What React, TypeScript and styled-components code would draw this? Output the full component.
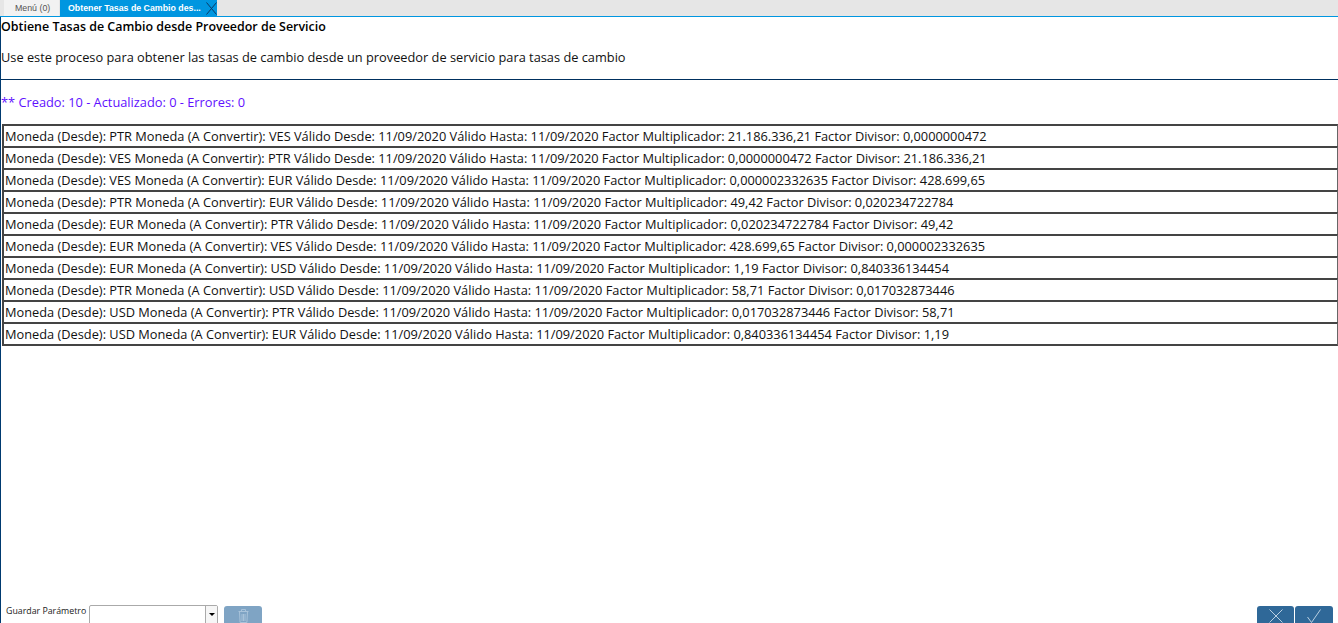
import React from "react";
import styled, { createGlobalStyle } from "styled-components";

const Global = createGlobalStyle`
  html, body { margin: 0; padding: 0; background: #fff; overflow: hidden; }
  * { box-sizing: border-box; }
`;

const Page = styled.div`
  width: 1338px;
  height: 623px;
  display: flex;
  flex-direction: column;
  font-family: "Open Sans", sans-serif;
  color: #111;
`;

const TabBar = styled.div`
  height: 17px;
  flex: none;
  display: flex;
  padding-left: 4px;
  background: #e6e6e6;
  border-bottom: 1px solid #0096e0;
`;

const Tab = styled.div<{ $active?: boolean }>`
  height: 16px;
  display: flex;
  align-items: center;
  font-family: "Liberation Sans", sans-serif;
  font-size: 8.8px;
  font-weight: ${(p) => (p.$active ? 700 : 400)};
  color: ${(p) => (p.$active ? "#fff" : "#555")};
  background: ${(p) => (p.$active ? "#0096e0" : "#f2f2f2")};
  padding: ${(p) => (p.$active ? "0 0 0 8px" : "0 0 0 11px")};
  width: ${(p) => (p.$active ? "157px" : "55px")};
  margin-right: ${(p) => (p.$active ? "0" : "1px")};
  white-space: nowrap;
`;

const CloseIcon = styled.svg`
  margin-left: auto;
  flex: none;
`;

const Body = styled.div`
  flex: 1;
  min-height: 0;
  display: flex;
  flex-direction: column;
  border-left: 1px solid #003a70;
`;

const Title = styled.div`
  height: 19px;
  font-size: 12.45px;
  font-weight: 600;
  line-height: 19px;
  color: #000;
`;

const Description = styled.div`
  margin-top: 12px;
  height: 31px;
  font-size: 12.8px;
  line-height: 18px;
`;

const Rule = styled.div`
  height: 1px;
  background: #00305f;
`;

const Summary = styled.div`
  margin-top: 13px;
  height: 31px;
  font-size: 12.8px;
  line-height: 18px;
  color: #5f10ff;
`;

const Results = styled.div`
  margin-left: 1px;
  display: flex;
  flex-direction: column;
`;

const ResultRow = styled.div`
  height: 22px;
  border-width: 2px 1px 0 2px;
  border-style: solid;
  border-color: #444 #666 #444 #444;
  padding-left: 1px;
  font-size: 12.8px;
  line-height: 21px;
  color: #111;
  white-space: nowrap;
  overflow: hidden;
  &:last-child { height: 24px; border-bottom-width: 2px; }
`;

const Spacer = styled.div`
  flex: 1;
`;

const Footer = styled.div`
  height: 18px;
  flex: none;
  display: flex;
  align-items: flex-start;
  padding-left: 5px;
`;

const SaveLabel = styled.span`
  font-size: 8.8px;
  line-height: 12px;
  width: 83px;
  color: #222;
  white-space: nowrap;
`;

const Combo = styled.div`
  width: 129px;
  height: 19px;
  display: flex;
  justify-content: flex-end;
  border: 1px solid #aaa;
  border-radius: 2px 2px 0 0;
  background: #fff;
`;

const ComboArrow = styled.div`
  width: 12px;
  border-left: 1px solid #aaa;
  background: #f6f6f6;
  display: flex;
  align-items: center;
  justify-content: center;
  &::after {
    content: "";
    border-left: 3px solid transparent;
    border-right: 3px solid transparent;
    border-top: 3px solid #000;
  }
`;

const DeleteButton = styled.div`
  margin: 1px 0 0 6px;
  width: 38px;
  height: 17px;
  border-radius: 3px 3px 0 0;
  background: #7fa4c4;
  display: flex;
  justify-content: center;
  padding-top: 3px;
`;

const Actions = styled.div`
  margin: 1px 0 0 auto;
  display: flex;
  gap: 1px;
  padding-right: 5px;
`;

const ActionButton = styled.div<{ $wide?: boolean }>`
  width: ${(p) => (p.$wide ? "38px" : "37px")};
  height: 17px;
  background: #2f6898;
  border-radius: 3px 3px 0 0;
  display: flex;
  justify-content: center;
  padding-top: 3px;
`;

const rows = [
  "Moneda (Desde): PTR Moneda (A Convertir): VES Válido Desde: 11/09/2020 Válido Hasta: 11/09/2020 Factor Multiplicador: 21.186.336,21 Factor Divisor: 0,0000000472",
  "Moneda (Desde): VES Moneda (A Convertir): PTR Válido Desde: 11/09/2020 Válido Hasta: 11/09/2020 Factor Multiplicador: 0,0000000472 Factor Divisor: 21.186.336,21",
  "Moneda (Desde): VES Moneda (A Convertir): EUR Válido Desde: 11/09/2020 Válido Hasta: 11/09/2020 Factor Multiplicador: 0,000002332635 Factor Divisor: 428.699,65",
  "Moneda (Desde): PTR Moneda (A Convertir): EUR Válido Desde: 11/09/2020 Válido Hasta: 11/09/2020 Factor Multiplicador: 49,42 Factor Divisor: 0,020234722784",
  "Moneda (Desde): EUR Moneda (A Convertir): PTR Válido Desde: 11/09/2020 Válido Hasta: 11/09/2020 Factor Multiplicador: 0,020234722784 Factor Divisor: 49,42",
  "Moneda (Desde): EUR Moneda (A Convertir): VES Válido Desde: 11/09/2020 Válido Hasta: 11/09/2020 Factor Multiplicador: 428.699,65 Factor Divisor: 0,000002332635",
  "Moneda (Desde): EUR Moneda (A Convertir): USD Válido Desde: 11/09/2020 Válido Hasta: 11/09/2020 Factor Multiplicador: 1,19 Factor Divisor: 0,840336134454",
  "Moneda (Desde): PTR Moneda (A Convertir): USD Válido Desde: 11/09/2020 Válido Hasta: 11/09/2020 Factor Multiplicador: 58,71 Factor Divisor: 0,017032873446",
  "Moneda (Desde): USD Moneda (A Convertir): PTR Válido Desde: 11/09/2020 Válido Hasta: 11/09/2020 Factor Multiplicador: 0,017032873446 Factor Divisor: 58,71",
  "Moneda (Desde): USD Moneda (A Convertir): EUR Válido Desde: 11/09/2020 Válido Hasta: 11/09/2020 Factor Multiplicador: 0,840336134454 Factor Divisor: 1,19",
];

export default function App() {
  return (
    <Page>
      <Global />
      <TabBar>
        <Tab>Menú (0)</Tab>
        <Tab $active>
          Obtener Tasas de Cambio des...
          <CloseIcon width="11" height="14" viewBox="0 0 11 14" fill="none" stroke="#0a3a66" strokeWidth="1">
            <path d="M.5 1.5 10.5 13.5M10.5 1.5 .5 13.5" />
          </CloseIcon>
        </Tab>
      </TabBar>
      <Body>
        <Title>Obtiene Tasas de Cambio desde Proveedor de Servicio</Title>
        <Description>Use este proceso para obtener las tasas de cambio desde un proveedor de servicio para tasas de cambio</Description>
        <Rule />
        <Summary>** Creado: 10 - Actualizado: 0 - Errores: 0</Summary>
        <Results>
          {rows.map((r) => (
            <ResultRow key={r}>{r}</ResultRow>
          ))}
        </Results>
        <Spacer />
        <Footer>
          <SaveLabel>Guardar Parámetro</SaveLabel>
          <Combo>
            <ComboArrow />
          </Combo>
          <DeleteButton>
            <svg width="11" height="14" viewBox="0 0 11 14" fill="none" stroke="#a9c3da" strokeWidth="1">
              <path d="M.5 2.5h10M3.5 2.5V.5h4v2M1.5 2.5l.6 11h6.8l.6-11M4 5v7M5.5 5v7M7 5v7" />
            </svg>
          </DeleteButton>
          <Actions>
            <ActionButton>
              <svg width="14" height="14" viewBox="0 0 14 14" fill="none" stroke="#b9cfe2" strokeWidth="1">
                <path d="M.5.5l13 13M13.5.5l-13 13" />
              </svg>
            </ActionButton>
            <ActionButton $wide>
              <svg width="14" height="14" viewBox="0 0 14 14" fill="none" stroke="#b9cfe2" strokeWidth="1">
                <path d="M.5 8l4 5.5L13.5.5" />
              </svg>
            </ActionButton>
          </Actions>
        </Footer>
      </Body>
    </Page>
  );
}
